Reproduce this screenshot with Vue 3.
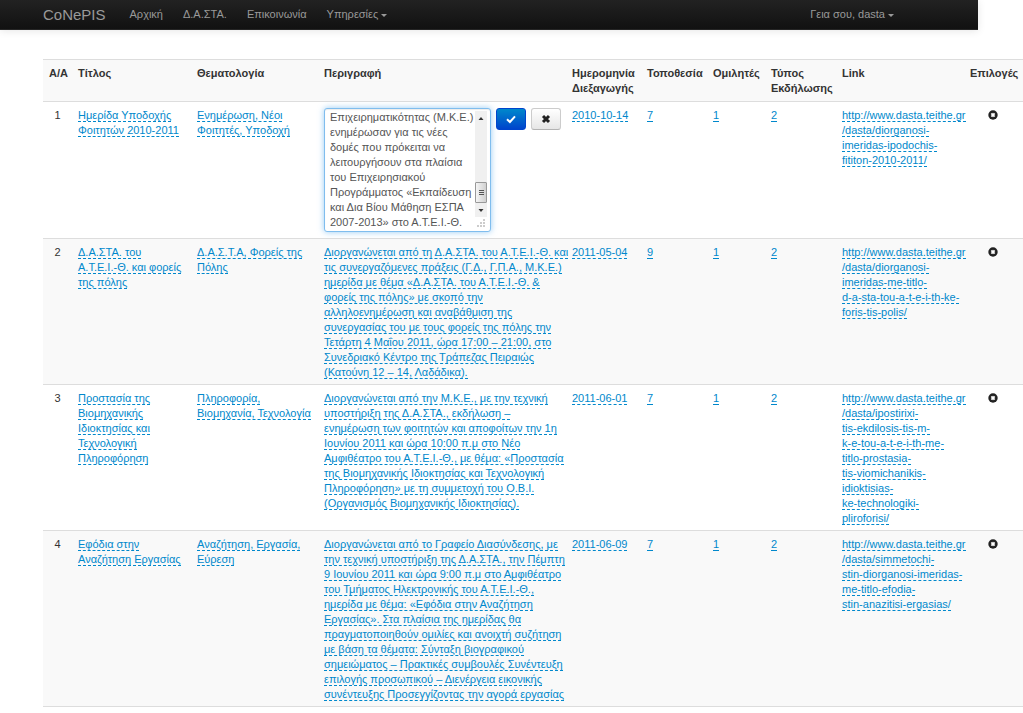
<script setup>
const nav = ['Αρχική', 'Δ.Α.ΣΤΑ.', 'Επικοινωνία']

const columns = [
  { key: 'no', label: 'A/A' },
  { key: 'title', label: 'Τίτλος' },
  { key: 'topic', label: 'Θεματολογία' },
  { key: 'text', label: 'Περιγραφή' },
  { key: 'date', label: 'Ημερομηνία\nΔιεξαγωγής' },
  { key: 'place', label: 'Τοποθεσία' },
  { key: 'speakers', label: 'Ομιλητές' },
  { key: 'type', label: 'Τύπος\nΕκδήλωσης' },
  { key: 'link', label: 'Link' },
]

const rows = [
  {
    no: 1,
    editing: true,
    title: 'Ημερίδα Υποδοχής\nΦοιτητών 2010-2011',
    topic: 'Ενημέρωση, Νέοι\nΦοιτητές, Υποδοχή',
    text: 'Επιχειρηματικότητας (Μ.Κ.Ε.)\nενημέρωσαν για τις νέες\nδομές που πρόκειται να\nλειτουργήσουν στα πλαίσια\nτου Επιχειρησιακού\nΠρογράμματος «Εκπαίδευση\nκαι Δια Βίου Μάθηση ΕΣΠΑ\n2007-2013» στο Α.Τ.Ε.Ι.-Θ.',
    date: '2010-10-14',
    place: '7',
    speakers: '1',
    type: '2',
    link: 'http://www.dasta.teithe.gr\n/dasta/diorganosi-\nimeridas-ipodochis-\nfititon-2010-2011/',
  },
  {
    no: 2,
    title: 'Δ.Α.ΣΤΑ. του\nΑ.Τ.Ε.Ι.-Θ. και φορείς\nτης πόλης',
    topic: 'Δ.Α.Σ.Τ.Α, Φορείς της\nΠόλης',
    text: 'Διοργανώνεται από τη Δ.Α.ΣΤΑ. του Α.Τ.Ε.Ι.-Θ. και\nτις συνεργαζόμενες πράξεις (Γ.Δ., Γ.Π.Α., Μ.Κ.Ε.)\nημερίδα με θέμα «Δ.Α.ΣΤΑ. του Α.Τ.Ε.Ι.-Θ. &\nφορείς της πόλης» με σκοπό την\nαλληλοενημέρωση και αναβάθμιση της\nσυνεργασίας του με τους φορείς της πόλης την\nΤετάρτη 4 Μαΐου 2011, ώρα 17:00 – 21:00, στο\nΣυνεδριακό Κέντρο της Τράπεζας Πειραιώς\n(Κατούνη 12 – 14, Λαδάδικα).',
    date: '2011-05-04',
    place: '9',
    speakers: '1',
    type: '2',
    link: 'http://www.dasta.teithe.gr\n/dasta/diorganosi-\nimeridas-me-titlo-\nd-a-sta-tou-a-t-e-i-th-ke-\nforis-tis-polis/',
  },
  {
    no: 3,
    title: 'Προστασία της\nΒιομηχανικής\nΙδιοκτησίας και\nΤεχνολογική\nΠληροφόρηση',
    topic: 'Πληροφορία,\nΒιομηχανία, Τεχνολογία',
    text: 'Διοργανώνεται από την Μ.Κ.Ε., με την τεχνική\nυποστήριξη της Δ.Α.ΣΤΑ., εκδήλωση –\nενημέρωση των φοιτητών και αποφοίτων την 1η\nΙουνίου 2011 και ώρα 10:00 π.μ στο Νέο\nΑμφιθέατρο του Α.Τ.Ε.Ι.-Θ., με θέμα: «Προστασία\nτης Βιομηχανικής Ιδιοκτησίας και Τεχνολογική\nΠληροφόρηση» με τη συμμετοχή του Ο.Β.Ι.\n(Οργανισμός Βιομηχανικής Ιδιοκτησίας).',
    date: '2011-06-01',
    place: '7',
    speakers: '1',
    type: '2',
    link: 'http://www.dasta.teithe.gr\n/dasta/ipostirixi-\ntis-ekdilosis-tis-m-\nk-e-tou-a-t-e-i-th-me-\ntitlo-prostasia-\ntis-viomichanikis-\nidioktisias-\nke-technologiki-\npliroforisi/',
  },
  {
    no: 4,
    title: 'Εφόδια στην\nΑναζήτηση Εργασίας',
    topic: 'Αναζήτηση, Εργασία,\nΕύρεση',
    text: 'Διοργανώνεται από το Γραφείο Διασύνδεσης, με\nτην τεχνική υποστήριξη της Δ.Α.ΣΤΑ., την Πέμπτη\n9 Ιουνίου 2011 και ώρα 9:00 π.μ στο Αμφιθέατρο\nτου Τμήματος Ηλεκτρονικής του Α.Τ.Ε.Ι.-Θ.,\nημερίδα με θέμα: «Εφόδια στην Αναζήτηση\nΕργασίας». Στα πλαίσια της ημερίδας θα\nπραγματοποιηθούν ομιλίες και ανοιχτή συζήτηση\nμε βάση τα θέματα: Σύνταξη βιογραφικού\nσημειώματος – Πρακτικές συμβουλές Συνέντευξη\nεπιλογής προσωπικού – Διενέργεια εικονικής\nσυνέντευξης Προσεγγίζοντας την αγορά εργασίας',
    date: '2011-06-09',
    place: '7',
    speakers: '1',
    type: '2',
    link: 'http://www.dasta.teithe.gr\n/dasta/simmetochi-\nstin-diorganosi-imeridas-\nme-titlo-efodia-\nstin-anazitisi-ergasias/',
  },
]
</script>

<template>
  <div class="page">
    <nav class="navbar">
      <a class="brand" href="#">CoNePIS</a>
      <a v-for="item in nav" :key="item" class="nav-link" href="#">{{ item }}</a>
      <a class="nav-link" href="#">Υπηρεσίες <i class="caret"></i></a>
      <a class="nav-link user" href="#">Γεια σου, dasta <i class="caret"></i></a>
    </nav>

    <main>
      <table>
        <colgroup>
          <col v-for="c in columns" :key="c.key" :class="'col-' + c.key" />
          <col class="col-options" />
        </colgroup>
        <thead>
          <tr>
            <th v-for="c in columns" :key="c.key">{{ c.label }}</th>
            <th>Επιλογές</th>
          </tr>
        </thead>
        <tbody>
          <tr v-for="row in rows" :key="row.no">
            <td v-for="c in columns" :key="c.key" :class="c.key">
              <template v-if="c.key === 'no'">{{ row.no }}</template>
              <form v-else-if="c.key === 'text' && row.editing" class="editor" @submit.prevent>
                <div class="field">
                  <textarea aria-label="Περιγραφή" :value="row.text" spellcheck="false"></textarea>
                  <div class="scrollbar" aria-hidden="true">
                    <svg class="arrow" viewBox="0 0 12 14"><path d="M3.5 9 6 6l2.500 3z" /></svg>
                    <span class="thumb"><i></i><i></i><i></i></span>
                    <svg class="arrow" viewBox="0 0 12 14"><path d="M3.500 6 6 9l2.500-3z" /></svg>
                  </div>
                  <svg class="grip" viewBox="0 0 10 10" aria-hidden="true">
                    <path d="M7 0h2v2H7zM4 3h2v2H4zM7 3h2v2H7zM1 6h2v2H1zM4 6h2v2H4zM7 6h2v2H7z" />
                  </svg>
                </div>
                <button class="btn primary" type="submit" aria-label="Αποθήκευση">
                  <svg viewBox="0 0 10 10"><path d="M1 5.300 3.900 8 9 2.300" /></svg>
                </button>
                <button class="btn" type="button" aria-label="Ακύρωση">
                  <svg viewBox="0 0 10 10"><path d="M2 2l6 6M8 2 2 8" /></svg>
                </button>
              </form>
              <a v-else class="editable" href="#">{{ row[c.key] }}</a>
            </td>
            <td class="options">
              <button class="remove" type="button" aria-label="Διαγραφή">
                <svg viewBox="0 0 10 10">
                  <circle cx="5" cy="5" r="4.700" />
                  <path d="M3.400 3.400l3.200 3.200M6.600 3.400 3.400 6.600" />
                </svg>
              </button>
            </td>
          </tr>
        </tbody>
      </table>
    </main>
  </div>
</template>

<style>
body {
  margin: 0;
  background: #fff;
}
</style>

<style scoped>
.page {
  font-family: "Liberation Sans", Arial, sans-serif;
  font-size: 11px;
  line-height: 15px;
  color: #333;
}
.navbar {
  display: flex;
  align-items: center;
  box-sizing: border-box;
  height: 30px;
  margin-right: 45px;
  padding: 0 74px 0 43px;
  background: linear-gradient(#222, #111);
  border-bottom: 1px solid #252525;
  box-shadow: 0 1px 8px rgba(0, 0, 0, 0.1);
}
.navbar a {
  color: #999;
  text-decoration: none;
  white-space: nowrap;
}
.navbar .brand {
  margin-right: 14px;
  font-size: 15px;
}
.nav-link {
  padding: 0 10px;
}
.user {
  margin-left: auto;
}
.caret {
  display: inline-block;
  border: 3px solid transparent;
  border-top-color: #999;
  border-bottom: 0;
  vertical-align: middle;
}
main {
  padding: 29px 0 0 43px;
}
table {
  width: 100%;
  table-layout: fixed;
  border-spacing: 0;
  border-bottom: 1px solid #ddd;
}
.col-no { width: 29px; }
.col-title { width: 119px; }
.col-topic { width: 127px; }
.col-date { width: 75px; }
.col-place { width: 66px; }
.col-speakers { width: 58px; }
.col-type { width: 71px; }
.col-link { width: 128px; }
.col-options { width: 59px; }
th,
td {
  padding: 6px 0 4px 6px;
  border-top: 1px solid #ddd;
  text-align: left;
  vertical-align: top;
  white-space: pre;
}
th {
  padding-bottom: 5px;
  background: #f9f9f9;
}
tbody tr:nth-child(even) td {
  background: #f9f9f9;
}
td.no {
  padding-left: 0;
  text-align: center;
}
.editable {
  color: #08c;
  text-decoration: none;
  border-bottom: 1px dashed #08c;
}
.editor {
  display: flex;
  align-items: flex-start;
  gap: 5px;
  margin-bottom: 2px;
}
.field {
  position: relative;
  width: 167px;
}
textarea {
  display: block;
  box-sizing: border-box;
  width: 100%;
  height: 124px;
  margin: 0;
  padding: 1px 17px 1px 5px;
  border: 1px solid #7fbdee;
  border-radius: 3px;
  outline: 0;
  box-shadow: inset 0 1px 1px rgba(0, 0, 0, 0.08), 0 0 6px rgba(82, 168, 236, 0.6);
  font: inherit;
  color: #555;
  white-space: pre;
  resize: none;
  overflow: hidden;
}
.scrollbar {
  position: absolute;
  top: 3px;
  right: 4px;
  bottom: 15px;
  width: 12px;
  display: flex;
  flex-direction: column;
  background: #f0f0f0;
}
.arrow {
  width: 12px;
  height: 14px;
  fill: #333;
}
.thumb {
  display: flex;
  flex-direction: column;
  align-items: center;
  justify-content: center;
  gap: 1px;
  box-sizing: border-box;
  height: 21px;
  margin-top: auto;
  border: 1px solid #999;
  border-radius: 1px;
  background: linear-gradient(90deg, #f5f5f5, #d0d0d0);
}
.thumb i {
  width: 5px;
  height: 1px;
  background: #555;
}
.grip {
  position: absolute;
  right: 5px;
  bottom: 3px;
  width: 10px;
  height: 10px;
  fill: #ccc;
}
.btn {
  display: flex;
  align-items: center;
  justify-content: center;
  box-sizing: border-box;
  width: 30px;
  height: 22px;
  padding: 0;
  border: 1px solid #ccc;
  border-bottom-color: #b3b3b3;
  border-radius: 3px;
  background: linear-gradient(#fff, #e6e6e6);
}
.btn svg {
  width: 10px;
  height: 10px;
  fill: none;
  stroke: #222;
  stroke-width: 3;
}
.btn.primary {
  border-color: #04c;
  background: linear-gradient(#08c, #04c);
}
.btn.primary svg {
  stroke: #fff;
  stroke-width: 2;
}
.options {
  padding-left: 24px;
}
.remove {
  display: block;
  padding: 2px 0;
  border: 0;
  background: none;
}
.remove svg {
  display: block;
  width: 10px;
  height: 10px;
  fill: #222;
}
.remove path {
  stroke: #fff;
  stroke-width: 2;
}
</style>
